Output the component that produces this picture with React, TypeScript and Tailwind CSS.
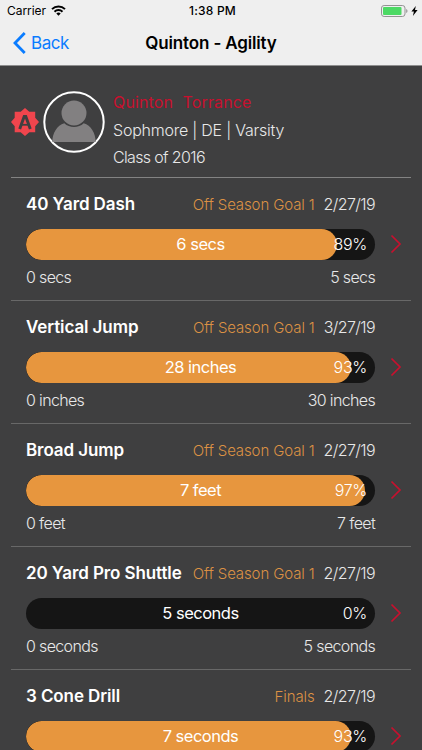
type Drill = {
  name: string;
  goal: string;
  date: string;
  value: string;
  percent: number;
  min: string;
  max: string;
};

const drills: Drill[] = [
  { name: "40 Yard Dash", goal: "Off Season Goal 1", date: "2/27/19", value: "6 secs", percent: 89, min: "0 secs", max: "5 secs" },
  { name: "Vertical Jump", goal: "Off Season Goal 1", date: "3/27/19", value: "28 inches", percent: 93, min: "0 inches", max: "30 inches" },
  { name: "Broad Jump", goal: "Off Season Goal 1", date: "2/27/19", value: "7 feet", percent: 97, min: "0 feet", max: "7 feet" },
  { name: "20 Yard Pro Shuttle", goal: "Off Season Goal 1", date: "2/27/19", value: "5 seconds", percent: 0, min: "0 seconds", max: "5 seconds" },
  { name: "3 Cone Drill", goal: "Finals", date: "2/27/19", value: "7 seconds", percent: 93, min: "0 seconds", max: "7 seconds" },
];

function StatusBar() {
  return (
    <div className="grid h-[22px] grid-cols-3 items-center pl-[7px] pr-[4px] text-[12px] leading-[22px] text-black">
      <div className="flex items-center gap-[5px]">
        <span className="tracking-[-0.05px]">Carrier</span>
        <svg className="-mt-px" width="15" height="11" viewBox="0 0 15 11" fill="none" stroke="#000" strokeWidth="2">
          <path d="M1 4.1a9.3 9.3 0 0 1 13 0" />
          <path d="M3.5 6.7a5.7 5.7 0 0 1 8 0" />
          <path d="M7.5 10.8 5.3 8.6a3.1 3.1 0 0 1 4.4 0Z" fill="#000" stroke="none" />
        </svg>
      </div>
      <span className="text-center font-medium tracking-[0.2px]">1:38 PM</span>
      <div className="flex items-center justify-end gap-[3px]">
        <svg width="27" height="12" viewBox="0 0 27 12">
          <rect x="0.5" y="0.5" width="23.5" height="11" rx="2.6" fill="none" stroke="#939393" />
          <rect x="2" y="2" width="18.5" height="8" rx="1" fill="#4cd964" />
          <path d="M25.2 4v4q1.3-.6 1.3-2t-1.3-2Z" fill="#939393" />
        </svg>
        <svg width="7" height="10" viewBox="0 0 7 10">
          <path d="M4.8 0 .4 5.6h2.5L1.9 10 6.6 4.1H4Z" fill="#000" />
        </svg>
      </div>
    </div>
  );
}

function NavBar() {
  return (
    <div className="grid h-[43px] grid-cols-[80px_1fr_80px] items-center text-[17px] leading-[22px]">
      <div className="flex items-center gap-[5px] pl-[13px] text-[#0a7cff]">
        <svg className="-mt-px" width="13" height="22" viewBox="0 0 13 22" fill="none" stroke="currentColor" strokeWidth="2.8">
          <path d="M11.7 1 2 11l9.7 10" />
        </svg>
        <span className="-mt-px tracking-[-0.45px]">Back</span>
      </div>
      <h1 className="-mt-px text-center text-[17px] font-semibold tracking-[-0.15px] text-black">Quinton - Agility</h1>
    </div>
  );
}

function Profile() {
  return (
    <section className="mx-[11px] flex h-[112px] border-b border-[#838383]">
      <svg className="mt-[42px] shrink-0" width="28" height="28" viewBox="0 0 28 28">
        <path
          d="M14 0 18.300 3.700H24.200V9.700L28 14 24.200 18.300V24.200H18.300L14 28 9.700 24.200H3.700V18.300L0 14 3.700 9.700V3.700H9.700Z"
          fill="#f0454d"
        />
        <path d="M8.700 21 13.200 8.500h1.600L19.300 21" fill="none" stroke="#3f3f40" strokeWidth="2.900" />
        <path d="M10.500 16.800h7" stroke="#3f3f40" strokeWidth="1.800" />
      </svg>
      <svg className="ml-[4px] mt-[25px] shrink-0" width="62" height="62" viewBox="0 0 62 62">
        <circle cx="31" cy="31" r="29.700" fill="none" stroke="#fff" strokeWidth="2" />
        <path d="M9.300 51C9.300 42.500 14 34 21.300 32.200c5.300 5 14.100 5 19.400 0C48 34 52.700 42.500 52.700 51Z" fill="#828081" />
        <circle cx="31" cy="22" r="12.500" fill="#828081" />
      </svg>
      <div className="ml-[8px] mt-[23px] text-[16px] font-light leading-[27.500px] text-[#e8e8e8]">
        <p className="whitespace-pre font-normal tracking-[0.15px] text-[#c8102e]">Quinton  Torrance</p>
        <p className="tracking-[-0.23px]">Sophmore | DE | Varsity</p>
        <p className="tracking-[-0.65px]">Class of 2016</p>
      </div>
    </section>
  );
}

function DrillRow({ drill }: { drill: Drill }) {
  return (
    <li className="mx-[11px] flex h-[123px] items-start border-b border-[#686868] pl-[15px]">
      <div className="w-[349px] shrink-0 pt-[15px]">
        <div className="flex h-[24px] items-center whitespace-nowrap">
          <h2 className="text-[17px] font-semibold tracking-[-0.1px] text-white">{drill.name}</h2>
          <span className="ml-auto text-[15px] font-light tracking-[-0.12px] text-[#dc9144]">{drill.goal}</span>
          <span className="-mt-[2px] ml-[9px] text-[16px] font-light tracking-[-0.6px] text-[#e8e8e8]">{drill.date}</span>
        </div>
        <div className="relative mt-[12px] h-[31px] overflow-hidden rounded-full bg-[#151515] text-white">
          <div className="h-full rounded-full bg-[#e7963e]" style={{ width: `${drill.percent}%` }} />
          <span className="absolute inset-0 text-center text-[16.500px] leading-[31px] tracking-[-0.5px]">{drill.value}</span>
          <span className="absolute right-[8px] top-0 text-[16px] font-light leading-[31px] tracking-[-0.3px]">{drill.percent}%</span>
        </div>
        <div className="mt-[5px] flex justify-between text-[16px] font-light leading-[24px] tracking-[-0.65px] text-[#e8e8e8]">
          <span>{drill.min}</span>
          <span>{drill.max}</span>
        </div>
      </div>
      <svg className="ml-[15px] mt-[56px]" width="12" height="20" viewBox="0 0 12 20" fill="none" stroke="#c8102e" strokeWidth="1.700">
        <path d="M1.500 1.500 10 10l-8.500 8.500" />
      </svg>
    </li>
  );
}

export default function App() {
  return (
    <div className="h-[750px] w-[422px] overflow-hidden bg-[#3f3f40] font-['Inter','Liberation_Sans',sans-serif]">
      <header className="h-[66px] border-b border-[#8e8e8e] bg-[#efefef]">
        <StatusBar />
        <NavBar />
      </header>
      <main>
        <Profile />
        <ul>
          {drills.map((drill) => (
            <DrillRow key={drill.name} drill={drill} />
          ))}
        </ul>
      </main>
    </div>
  );
}
